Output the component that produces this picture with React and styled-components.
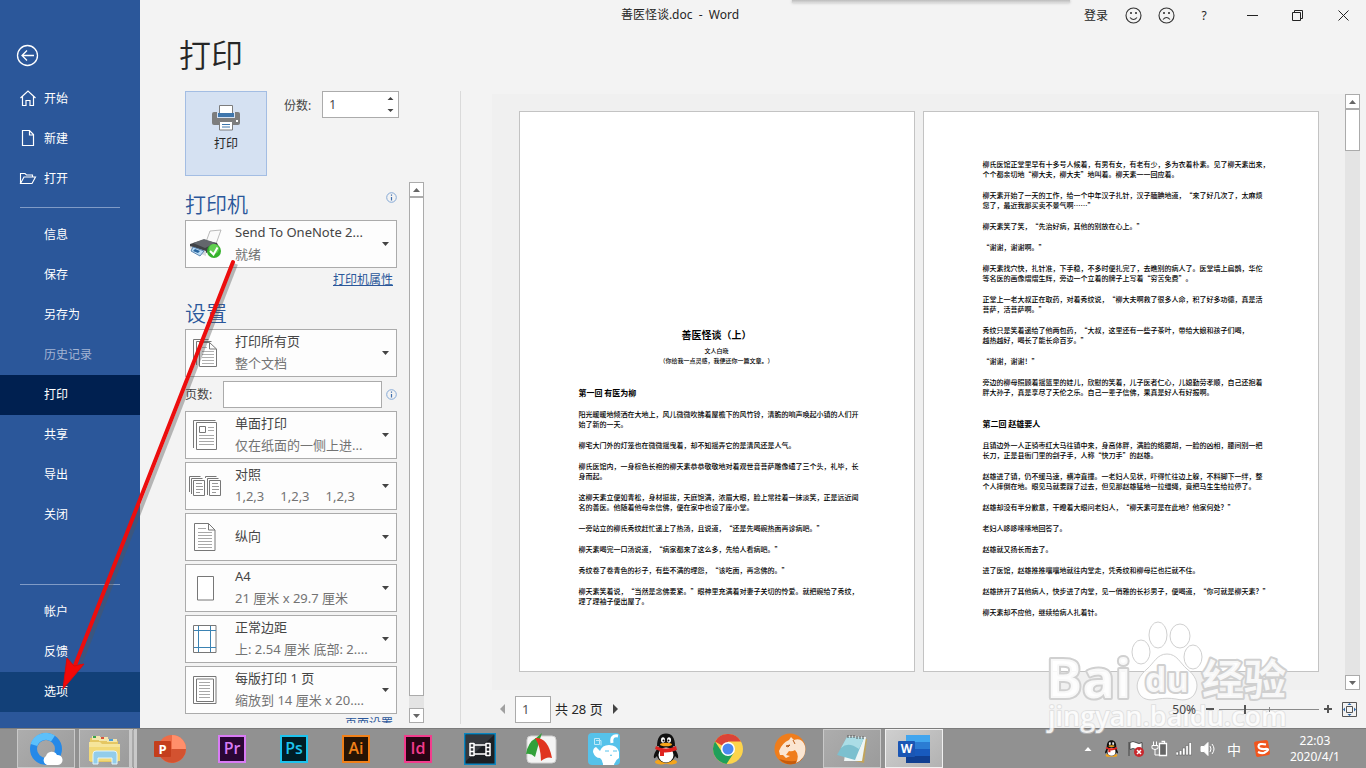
import React from 'react'
import styled, { createGlobalStyle, css } from 'styled-components'

const GlobalStyle = createGlobalStyle`
  * {
    box-sizing: border-box;
  }
  body {
    margin: 0;
    font-family: 'Noto Sans', 'Noto Sans CJK SC', sans-serif;
    font-size: 12px;
    color: #262626;
    background: #f3f3f3;
  }
  button, input {
    font: inherit;
    color: inherit;
  }
  svg {
    display: block;
    flex: none;
  }
`

const Screen = styled.div`
  position: relative;
  display: flex;
  flex-direction: column;
  height: 100vh;
  min-height: 768px;
  overflow: hidden;
`

const Window = styled.div`
  flex: 1;
  display: flex;
  min-height: 0;
`

/* ---------- sidebar ---------- */

const Sidebar = styled.nav`
  flex: none;
  display: flex;
  flex-direction: column;
  width: 140px;
  padding-bottom: 16px;
  background: #2b579a;
  color: #fff;
`

const BackButton = styled.button`
  display: flex;
  align-items: flex-end;
  height: 79px;
  padding: 0 0 12px 16px;
  border: 0;
  background: none;
`

const NavItem = styled.a`
  display: flex;
  align-items: center;
  gap: 7px;
  height: 40px;
  padding-bottom: 2px;
  padding-left: ${({ $icon }) => ($icon ? '19px' : '44px')};
  color: ${({ $muted }) => ($muted ? '#a3b4d3' : '#fff')};
  background: ${({ $state }) => ({ active: '#002050', hover: '#124078' }[$state] || 'none')};
  text-decoration: none;
`

const Divider = styled.hr`
  width: 100px;
  height: 1px;
  margin: 8px 20px 7px;
  border: 0;
  background: #809bc6;
`

const Spacer = styled.div`
  flex: 1;
`

/* ---------- title bar ---------- */

const Main = styled.main`
  flex: 1;
  display: flex;
  flex-direction: column;
  min-width: 0;
`

const TitleBar = styled.header`
  display: flex;
  align-items: center;
  height: 30px;
  padding-left: 140px;
`

const DocTitle = styled.div`
  flex: 1;
  padding-bottom: 2px;
  text-align: center;
  white-space: pre;
`

const TitleActions = styled.div`
  display: flex;
  align-items: center;
`

const TitleButton = styled.button`
  display: flex;
  align-items: center;
  justify-content: center;
  width: ${({ $width }) => $width || 46}px;
  height: 30px;
  padding: 0;
  border: 0;
  background: none;
`

const TopShade = styled.div`
  position: absolute;
  top: 0;
  left: 58%;
  width: 278px;
  height: 3px;
  background: linear-gradient(#bcbcbc, #dedede);
  box-shadow: 0 0 3px #bbb;
`

const PageTitle = styled.h1`
  height: 61px;
  margin: 0 0 0 39px;
  font-size: 32px;
  font-weight: 350;
  line-height: 50px;
`

const Content = styled.div`
  flex: 1;
  display: flex;
  min-height: 0;
`

/* ---------- settings ---------- */

const Settings = styled.section`
  flex: none;
  display: flex;
  flex-direction: column;
  width: 321px;
  margin-bottom: 4px;
  padding-left: 45px;
  border-right: 1px solid #dadada;
`

const PrintRow = styled.div`
  display: flex;
  align-items: flex-start;
  height: 91px;
`

const PrintButton = styled.button`
  display: flex;
  flex-direction: column;
  align-items: center;
  gap: 3px;
  width: 82px;
  height: 85px;
  padding: 13px 0 0;
  border: 1px solid #a3bde3;
  background: #d5e1f2;
`

const CopiesLabel = styled.label`
  display: flex;
  align-items: center;
  gap: 11px;
  margin-left: 17px;
  color: #444;
`

const Spinner = styled.span`
  display: flex;
  align-items: center;
  width: 77px;
  height: 27px;
  padding-right: 4px;
  border: 1px solid #ababab;
  background: #fff;
`

const SpinInput = styled.input`
  flex: 1;
  min-width: 0;
  padding: 0 6px;
  border: 0;
  background: none;
`

const ScrollRow = styled.div`
  flex: 1;
  display: flex;
  gap: 12px;
  min-height: 0;
  margin-bottom: 1px;
`

const SettingsList = styled.div`
  width: 212px;
  overflow: hidden;
`

const SectionHead = styled.div`
  display: flex;
  align-items: center;
  justify-content: space-between;
  height: 38px;
  padding-top: 3px;

  svg {
    margin-bottom: 10px;
  }
`

const SectionTitle = styled.h2`
  margin: 0;
  color: #2b579a;
  font-size: 21px;
  font-weight: 350;
`

const LinkRow = styled.div`
  height: 23px;
  padding-right: 4px;
  line-height: ${({ $tight }) => ($tight ? '14px' : '23px')};
  text-align: right;

  a {
    color: #2b579a;
  }
`

const Group = styled.div`
  display: flex;
  flex-direction: column;
  gap: 3px;
`

const OptionButton = styled.button`
  display: flex;
  align-items: center;
  width: 100%;
  height: 48px;
  padding: 0 7px 0 0;
  border: 1px solid #ababab;
  background: #fdfdfd;
  font-size: 13px;
  line-height: 22px;
  text-align: left;
  white-space: nowrap;
`

const OptionIcon = styled.span`
  display: flex;
  justify-content: ${({ $start }) => ($start ? 'flex-start' : 'center')};
  flex: none;
  width: 38px;
  margin-right: 11px;
  padding-left: ${({ $start }) => ($start ? '3px' : '0')};
`

const OptionText = styled.span`
  flex: 1;
  display: flex;
  flex-direction: column;
  min-width: 0;
  padding-bottom: 3px;
  color: #444;
`

const OptionSub = styled.span`
  display: flex;
  gap: 16px;
  color: #737373;
`

const PagesLabel = styled.label`
  display: flex;
  align-items: center;
  justify-content: space-between;
  height: 28px;
  color: #444;

  input {
    width: 159px;
    height: 27px;
    margin-left: 6px;
    border: 1px solid #ababab;
    background: #fff;
  }
`

/* ---------- scroll bars ---------- */

const ScrollTrack = styled.div`
  flex: none;
  display: flex;
  flex-direction: column;
  width: 15px;
  background: #e4e4e4;
`

const ScrollButton = styled.button`
  display: flex;
  align-items: center;
  justify-content: center;
  width: 15px;
  height: 15px;
  padding: 0;
  border: 1px solid #ababab;
  background: #fff;
`

const ScrollThumb = styled.div`
  border: 1px solid #ababab;
  background: #fff;
  ${({ $grow }) => ($grow ? css`flex: 1; margin-bottom: 12px;` : css`height: 42px; margin-bottom: auto;`)}
`

/* ---------- preview ---------- */

const Preview = styled.section`
  flex: 1;
  display: flex;
  flex-direction: column;
  min-width: 0;
  padding-left: 31px;
`

const PreviewArea = styled.div`
  flex: 1;
  display: flex;
  min-height: 0;
  padding: 3px 6px 0 0;
`

const Sheets = styled.div`
  flex: 1;
  display: flex;
  justify-content: center;
  align-items: flex-start;
  gap: 8px;
  min-width: 0;
  padding-top: 17px;
  background: #f0f0f0;
`

const Sheet = styled.article`
  display: flex;
  flex-direction: column;
  flex: 0 1 396px;
  min-width: 0;
  min-height: 561px;
  padding: 47px 59px 0;
  border: 1px solid #c3c3c3;
  background: #fff;
  color: #000;
  font-family: 'Noto Sans CJK SC', sans-serif;
  font-size: 7px;
  font-weight: 500;
  line-height: 10px;
  white-space: nowrap;
  text-spacing-trim: space-all;

  p {
    margin: 0 0 11px;
  }
  h4 {
    margin: 10px 0;
    font-size: 8px;
    line-height: 12px;
  }
`

const Cover = styled.div`
  margin: 169px 0 11px;
  font-size: 6px;
  text-align: center;

  h3 {
    margin: 0 0 4px;
    font-size: 10px;
    line-height: 14px;
  }
`

const PreviewFooter = styled.footer`
  display: flex;
  align-items: center;
  justify-content: space-between;
  height: 38px;
  padding: 0 9px 0 8px;
`

const Pager = styled.div`
  display: flex;
  align-items: center;
  font-size: 13px;

  input {
    width: 36px;
    height: 27px;
    margin: 0 4px 0 9px;
    padding: 0 6px;
    border: 1px solid #ababab;
    background: #fff;
    color: #555;
  }
`

const PageCount = styled.span`
  margin-right: 9px;
  padding-bottom: 1px;
`

const PlainButton = styled.button`
  display: flex;
  padding: 0;
  border: 0;
  background: none;
`

const Zoom = styled.div`
  position: relative;
  z-index: 1;
  display: flex;
  align-items: center;
  gap: 5px;
  color: #444;

  output {
    margin-right: 5px;
  }
`

const ZoomRange = styled.input`
  appearance: none;
  width: 100px;
  height: 10px;
  margin: 0;
  background:
    linear-gradient(#8a8a8a, #8a8a8a) center / 1px 5px no-repeat,
    linear-gradient(#8a8a8a, #8a8a8a) center / 100% 1px no-repeat;

  &::-webkit-slider-thumb {
    appearance: none;
    width: 2px;
    height: 9px;
    background: #555;
  }
`

/* ---------- taskbar ---------- */

const Taskbar = styled.footer`
  flex: none;
  display: flex;
  align-items: center;
  height: 40px;
  padding-left: 17px;
  border-top: 1px solid #7c7c7c;
  background: #919191;
`

const Apps = styled.div`
  flex: 1;
  display: flex;
  gap: 4px;
`

const openApp = css`
  border-color: #c9c9c9;
  background: linear-gradient(135deg, #adadad, #9b9b9b);
`

const focusedApp = css`
  border-color: #f0f0f0;
  background: linear-gradient(135deg, #cfcfcf, #b2b2b2);
`

const AppButton = styled.button`
  display: flex;
  align-items: center;
  justify-content: center;
  width: 58px;
  height: 39px;
  padding: 0;
  border: 1px solid transparent;
  background: none;
  ${({ $state }) => $state === 'open' && openApp}
  ${({ $state }) => $state === 'focused' && focusedApp}
  ${({ $stack }) => $stack && css`
    border-right: 8px double #c9c9c9;
  `}
`

const Tray = styled.div`
  display: flex;
  align-items: center;
`

const TrayButton = styled.button`
  display: flex;
  align-items: center;
  justify-content: center;
  width: ${({ $wide }) => ($wide ? 28 : 24)}px;
  height: 39px;
  padding: 0;
  border: 0;
  background: none;
  color: #fff;
  font-size: 14px;
`

const Clock = styled.time`
  margin: 0 26px 0 14px;
  color: #fff;
  line-height: 16px;
  text-align: center;
`

/* ---------- marks drawn over the screen ---------- */

const ArrowMark = styled.svg`
  position: absolute;
  left: 50px;
  top: 250px;
  pointer-events: none;
`

const Watermark = styled.svg`
  position: absolute;
  right: 66px;
  bottom: 28px;
  pointer-events: none;
  font-family: 'Open Sans', 'Noto Sans CJK SC', sans-serif;
`

/* ---------- icons ---------- */

const Caret = ({ up, color = '#444', size = 7 }) => (
  <svg width={size} height="4" viewBox="0 0 7 4">
    <path d={up ? 'M0 4L3.500 0L7 4z' : 'M0 0h7L3.500 4z'} fill={color} />
  </svg>
)

const SideCaret = ({ left }) => (
  <svg width="6" height="10" viewBox="0 0 6 10">
    <path d={left ? 'M5 0v10L0 5z' : 'M1 0v10l5-5z'} fill={left ? '#a0a0a0' : '#444'} />
  </svg>
)

const BackIcon = () => (
  <svg width="23" height="23" viewBox="0 0 23 23" fill="none" stroke="#fff" strokeWidth="1.3">
    <circle cx="11.500" cy="11.500" r="10" />
    <path d="M18 11.500H6M11 6.500l-5 5 5 5" />
  </svg>
)

const NavIcons = {
  home: (
    <svg width="18" height="18" viewBox="0 0 18 18" fill="none" stroke="#fff" strokeWidth="1.2">
      <path d="M1.500 9L9 2l7.500 7M3.500 7.500v9h3.500v-5h4v5h3.500v-9" />
    </svg>
  ),
  file: (
    <svg width="18" height="18" viewBox="0 0 18 18" fill="none" stroke="#fff" strokeWidth="1.2">
      <path d="M3.500 1.500h7l4 4v11h-11zM10.500 1.500v4.500h4" />
    </svg>
  ),
  folder: (
    <svg width="18" height="18" viewBox="0 0 18 18" fill="none" stroke="#fff" strokeWidth="1.1">
      <path d="M1.500 14.500v-10h4.500l1.500 1.500h6v2M1.500 14.500l3.500-6.500h11.500l-3.500 6.500z" />
    </svg>
  )
}

const Face = ({ sad }) => (
  <svg width="17" height="17" viewBox="0 0 17 17" fill="none" stroke="#333" strokeWidth="1.100">
    <circle cx="8.500" cy="8.500" r="7.500" />
    <path d={sad ? 'M5 12.500q3.500-4 7 0' : 'M5 10.500q3.500 4 7 0'} />
    <path d="M6 5v2M11 5v2" strokeWidth="1.600" />
  </svg>
)

const PrinterIcon = () => (
  <svg width="28" height="26" viewBox="0 0 28 26">
    <rect x="0" y="7" width="28" height="13" rx="2" fill="#7d7d7d" />
    <path d="M5 6h18v7H5z" fill="#d5e1f2" />
    <path d="M7.500.500h13v11h-13z" fill="#fff" stroke="#7d7d7d" />
    <path d="M6 8h16v4H6z" fill="#3f76ac" />
    <path d="M8 1h12v7H8z" fill="#fff" />
    <path d="M7.500 16.500h13v8.500h-13z" fill="#fff" stroke="#7d7d7d" />
    <path d="M10 19.500h8M10 22h8" stroke="#3f76ac" />
    <rect x="24" y="15" width="2" height="2" fill="#fff" />
  </svg>
)

const InfoIcon = () => (
  <svg width="11" height="11" viewBox="0 0 11 11" fill="none">
    <circle cx="5.500" cy="5.500" r="4.800" stroke="#85a9d6" />
    <path d="M5.500 5v3.500M5.500 2.500v1.200" stroke="#3f6fae" strokeWidth="1.200" />
  </svg>
)

const DeviceIcon = () => (
  <svg width="34" height="30" viewBox="0 0 34 30">
    <path d="M17 13L21 2l11-1-5 14z" fill="#fafafa" stroke="#aaa" strokeWidth=".8" />
    <path d="M1 15l13-4 14 3 2 4-13 6-16-6z" fill="#3f4246" />
    <path d="M4 14l11-4 12 4-11 5z" fill="#63676c" />
    <path d="M1 17l16 5v5L2 21z" fill="#d5dade" />
    <path d="M4 18l11 4-4 5-9-5z" fill="#b9dcf5" stroke="#3c6c9e" strokeWidth=".8" />
    <path d="M6 20l5 2-2 2-5-2z" fill="#28659f" />
    <circle cx="25" cy="22" r="7" fill="#35b22c" />
    <circle cx="25" cy="20" r="5" fill="#62cf52" />
    <path d="M21 22l3.500 3.500 4-7" fill="none" stroke="#fff" strokeWidth="2" />
  </svg>
)

const line = { fill: '#fff', stroke: '#777', strokeWidth: 1 }

const OptionIcons = {
  device: <DeviceIcon />,
  all: (
    <svg width="26" height="30" viewBox="0 0 26 30" {...line}>
      <path d="M1.500 26V1.500h15M4.500 27V3.500h15" fill="none" />
      <path d="M7.500 4.500h10l7 6.500v17.500h-17zM17.500 4.500v6.500h7" />
      <path d="M10 9.500h5M10 13.500h12M10 16.500h12M10 19.500h12M10 22.500h12M10 25.500h12" stroke="#b0b0b0" />
    </svg>
  ),
  single: (
    <svg width="26" height="32" viewBox="0 0 26 32" {...line}>
      <path d="M1.500 29V1.500h22" fill="none" />
      <path d="M4.500 3.500h20v27h-20zM7.500 7.500h6v6h-6z" />
      <path d="M16 8.500h6M16 11.500h6M7 16.500h15M7 19.500h15M7 22.500h15M7 25.500h15" stroke="#a8a8a8" />
    </svg>
  ),
  collate: (
    <svg width="33" height="22" viewBox="0 0 33 22" {...line}>
      <path d="M.500 17V1.500h11M2.500 19V3.500h11M16.500 3V1.500h11M18.500 20V3.500h11" fill="none" />
      <path d="M4.500 5.500h11v15h-11zM20.500 5.500h11v15h-11z" />
      <path d="M7 8.500h6M7 11.500h7M7 14.500h7M7 17.500h4M23 8.500h6M23 11.500h7M23 14.500h7M23 17.500h4" stroke="#999" />
    </svg>
  ),
  portrait: (
    <svg width="22" height="29" viewBox="0 0 22 29" {...line}>
      <path d="M.500.500h14l6.500 6.500v20.500H.500zM14.500.500v6.500h6.500" />
      <path d="M4 5.500h8M4 9.500h14M4 12.500h14M4 15.500h14M4 18.500h14M4 21.500h14M4 24.500h14" stroke="#a8a8a8" />
    </svg>
  ),
  size: (
    <svg width="17" height="25" viewBox="0 0 17 25" {...line}>
      <path d="M.500.500h16v23.500H.500z" />
    </svg>
  ),
  margins: (
    <svg width="24" height="29" viewBox="0 0 24 29" {...line}>
      <path d="M.500.500h22.500v27H.500z" />
      <path d="M5.500 1v26M17.500 1v26M1 5.500h22M1 22.500h22" stroke="#3b83b3" />
    </svg>
  ),
  sheet: (
    <svg width="24" height="29" viewBox="0 0 24 29" {...line}>
      <path d="M.500.500h22.500v27H.500zM3.500 3h17v22.500h-17z" />
      <path d="M6 6.500h11M6 9.500h11M6 12.500h11M6 15.500h11M6 18.500h11M6 21.500h11" stroke="#a8a8a8" />
    </svg>
  )
}

const FitIcon = () => (
  <svg width="15" height="15" viewBox="0 0 15 15" fill="none" stroke="#555">
    <path d="M.500.500h14v14H.500zM4.500 4.500h6v6h-6z" />
    <path d="M7.500 1l2 2h-4zM7.500 14l2-2h-4zM1 7.500l2-2v4zM14 7.500l-2-2v4z" fill="#2b66a8" stroke="none" />
  </svg>
)

const AdobeIcon = ({ text, color, dark }) => (
  <svg width="30" height="30" viewBox="0 0 30 30">
    <rect x="1" y="1" width="28" height="28" fill={color} />
    <rect x="3" y="3" width="24" height="24" fill={dark} />
    <text x="15" y="20" fill={color} fontSize="16" fontWeight="600" textAnchor="middle" fontFamily="'Open Sans', sans-serif">{text}</text>
  </svg>
)

const Penguin = ({ size = 32 }) => (
  <svg width={size} height={size} viewBox="0 0 32 32">
    <path d="M9 14c-3 3-6 8-5 11 1 1 3-2 3-2h18s2 3 3 2c1-3-2-8-5-11z" fill="#111" />
    <ellipse cx="11" cy="29" rx="6" ry="2.500" fill="#f5a51b" />
    <ellipse cx="21" cy="29" rx="6" ry="2.500" fill="#f5a51b" />
    <ellipse cx="16" cy="20" rx="9.500" ry="10" fill="#111" />
    <ellipse cx="16" cy="22" rx="7.500" ry="7.500" fill="#fff" />
    <path d="M7 13c0-8 3-12.500 9-12.500S25 5 25 13z" fill="#111" />
    <ellipse cx="13" cy="7" rx="2" ry="2.800" fill="#fff" />
    <ellipse cx="19" cy="7" rx="2" ry="2.800" fill="#fff" />
    <circle cx="13.500" cy="7.500" r="1" fill="#111" />
    <circle cx="18.500" cy="7.500" r="1" fill="#111" />
    <ellipse cx="16" cy="11.500" rx="6" ry="1.700" fill="#f5a51b" />
    <path d="M6 13q10 5 20 0l1 4q-8 3-13 2.500V23h-4v-5l-5-2z" fill="#e0231f" />
  </svg>
)

const AppIcons = {
  browser: (
    <svg width="34" height="34" viewBox="0 0 34 34">
      <circle cx="17" cy="17" r="12.500" fill="none" stroke="#2589e8" strokeWidth="7" />
      <path d="M5 13a12.500 12.500 0 0 1 19-6.500" fill="none" stroke="#5cc0fb" strokeWidth="7" />
      <path d="M18 33a5 5 0 0 1-1-9 6 6 0 0 1 11-1 5 5 0 0 1 1 10z" fill="#fff" />
    </svg>
  ),
  explorer: (
    <svg width="34" height="32" viewBox="0 0 34 32">
      <path d="M2 5h12l2 3h14v21H2z" fill="#e5c763" />
      <path d="M4 3h8v4H4z" fill="#f3e6ad" />
      <path d="M5 3h3v2H5z" fill="#3aa34b" />
      <path d="M11 4h9v4h-9z" fill="#f3e6ad" />
      <path d="M13 4h3v2h-3z" fill="#d9533b" />
      <path d="M19 6h10v3H19z" fill="#f3e6ad" />
      <path d="M21 6h4v2h-4z" fill="#4a9fd8" />
      <path d="M1 9h11l2 2h18v17H1z" fill="#f6e59b" />
      <path d="M1 14h31v14H1z" fill="#f2d977" />
      <path d="M5 31V21q0-3 3-3h18q3 0 3 3v10h-5v-6H10v6z" fill="#93cdea" stroke="#dff4fc" />
    </svg>
  ),
  powerpoint: (
    <svg width="34" height="30" viewBox="0 0 34 30">
      <circle cx="19" cy="15" r="14" fill="#ed6c47" />
      <path d="M19 1a14 14 0 0 1 14 14H19z" fill="#ff8f6b" />
      <path d="M33 15a14 14 0 0 1-27 5l13-5z" fill="#d35230" />
      <rect x="1" y="7" width="17" height="16" rx="1" fill="#c43e1c" />
      <text x="9.500" y="20" fill="#fff" fontSize="13" fontWeight="700" textAnchor="middle" fontFamily="'Open Sans', sans-serif">P</text>
    </svg>
  ),
  premiere: <AdobeIcon text="Pr" color="#d97bf5" dark="#2a0634" />,
  photoshop: <AdobeIcon text="Ps" color="#1ec3ee" dark="#001d26" />,
  illustrator: <AdobeIcon text="Ai" color="#f08019" dark="#281404" />,
  indesign: <AdobeIcon text="Id" color="#f23c8d" dark="#280414" />,
  film: (
    <svg width="32" height="32" viewBox="0 0 32 32">
      <rect width="32" height="32" fill="#0a86c0" />
      <rect x="1.500" y="1.500" width="29" height="29" fill="#1c1f23" />
      <path d="M2 2h28L2 28z" fill="#34383d" />
      <path d="M6 10v13M10 10v13M22 10v13M26 10v13M10 12h12M10 21h12" stroke="#fff" strokeWidth="1.500" />
      <path d="M6 10.500h4M6 14.500h4M6 18.500h4M6 22.500h4M22 10.500h4M22 14.500h4M22 18.500h4M22 22.500h4" stroke="#fff" strokeWidth="1.500" />
    </svg>
  ),
  capture: (
    <svg width="32" height="32" viewBox="0 0 32 32">
      <rect x="1" y="3" width="29" height="27" rx="4" fill="#f4f4f4" stroke="#d0d0d0" />
      <path d="M0 21Q2 9 10 5l6-5-2 6-5 18q-4-4-9-3z" fill="#32a03a" />
      <path d="M9 5q13-1 17 20-5-2-11 3Q15 14 9 5z" fill="#e0341f" />
    </svg>
  ),
  cartoon: (
    <svg width="32" height="32" viewBox="0 0 32 32">
      <rect width="32" height="32" rx="4" fill="#56c2ea" />
      <path d="M24 10c-1-5 1-8 6-7" fill="none" stroke="#fff" strokeWidth="3" />
      <path d="M5 19q0-4 3-5l4 4q2-6 9-6 8 0 10 7v6q-4 2-5 7H15q0-5-3-7-5 0-7-6z" fill="#fff" />
      <path d="M17 18h4M25 18h4M22 22q1 1 2 0" stroke="#56c2ea" fill="none" />
      <path d="M6.500 5.500h5v6h-5zM8 7.500h5v5" fill="none" stroke="#bfe9f8" />
    </svg>
  ),
  qq: <Penguin />,
  chrome: (
    <svg width="30" height="30" viewBox="0 0 30 30">
      <circle cx="15" cy="15" r="15" fill="#fdd44b" />
      <path d="M15 15L2 7.500A15 15 0 0 1 28 7.500H15z" fill="#dc4437" />
      <path d="M2 7.500a15 15 0 0 0 11.500 22.400L21 18.500 9 18z" fill="#1f9f5b" />
      <circle cx="15" cy="15" r="7" fill="#fff" />
      <circle cx="15" cy="15" r="5.500" fill="#4b88f0" />
    </svg>
  ),
  cheetah: (
    <svg width="32" height="32" viewBox="0 0 32 32">
      <circle cx="16" cy="16" r="15.500" fill="#ef7d1c" />
      <path d="M5 26A15.500 15.500 0 0 0 29 25q-8 6-24 1z" fill="#c65b0b" />
      <path d="M5 18q3-8 10-11l2-3 3 3q8-3 11 6 2 12-9 17 4-8-1-13-3 2-6 1l-3 4 4 1-4 2-3-3-3 0z" fill="#fbe6d2" />
      <path d="M12 13l4-1-2 2zM19 7l2 4" stroke="#b85a16" fill="none" />
    </svg>
  ),
  notepad: (
    <svg width="32" height="32" viewBox="0 0 32 32">
      <path d="M12 4l19 2-3 24-9-2z" fill="#c2a45a" />
      <path d="M12 3l18 1-4 24H8z" fill="#eef5f5" />
      <path d="M11 4l17 1-9 22L1 22z" fill="#7cc0cf" />
      <path d="M11 4l17 1-5 11Q12 8 5 15z" fill="#abdde6" />
      <path d="M12 2v3M15 2v3M18 2v3M21 3v3M24 3v3M27 3v3" stroke="#555" />
    </svg>
  ),
  word: (
    <svg width="34" height="30" viewBox="0 0 34 30">
      <rect x="9" y="1" width="24" height="7" fill="#41a5ee" />
      <rect x="9" y="8" width="24" height="7" fill="#2b7cd3" />
      <rect x="9" y="15" width="24" height="7" fill="#185abd" />
      <rect x="9" y="22" width="24" height="7" fill="#103f91" />
      <rect x="1" y="7" width="17" height="16" rx="1" fill="#1a56b4" />
      <text x="9.500" y="19" fill="#fff" fontSize="12" fontWeight="700" textAnchor="middle" fontFamily="'Open Sans', sans-serif">W</text>
    </svg>
  )
}

const TrayIcons = {
  flag: (
    <svg width="18" height="18" viewBox="0 0 18 18">
      <path d="M2 2v14M3 2.500q3-2 6 0t6 0v7q-3 2-6 0t-6 0z" fill="#fff" stroke="#333" strokeWidth=".8" />
      <circle cx="12" cy="12" r="5" fill="#c9282d" />
      <path d="M10 10l4 4M14 10l-4 4" stroke="#fff" strokeWidth="1.500" />
    </svg>
  ),
  battery: (
    <svg width="18" height="18" viewBox="0 0 18 18" fill="none" stroke="#fff">
      <path d="M8.500 3.500h7v12h-7zM10.500 1.500h3v2" fill="#666" strokeWidth="1.300" />
      <path d="M2.500 1.500v4M5.500 1.500v4M1 5.500h6v3q-3 2-6 0zM4 9v6h4" />
    </svg>
  ),
  signal: (
    <svg width="16" height="14" viewBox="0 0 16 14" fill="#fff" stroke="#555" strokeWidth=".5">
      <path d="M0 10h2.500v3H0zM3.300 8.500h2.500V13H3.300zM6.500 6H9v7H6.500zM9.800 3.500h2.500V13H9.800zM13 .500h2.500V13H13z" />
    </svg>
  ),
  sound: (
    <svg width="16" height="16" viewBox="0 0 16 16" fill="none" stroke="#fff">
      <path d="M1 5.500h3l4-4v13l-4-4H1z" fill="#fff" />
      <path d="M10 5q2 3 0 6M12 3q4 5 0 10" />
    </svg>
  ),
  sogou: (
    <svg width="17" height="17" viewBox="0 0 17 17">
      <path d="M1 3q0-1 1.500-1.500L13 0q1.500 0 2 1.500L17 13q0 1.500-1.500 2L5 17q-1.500 0-2-1.500z" fill="#f1551d" />
      <path d="M13 4.500Q5.500 3 5.500 6.200T12 9t-1 4q-3 .5-6-1" fill="none" stroke="#fff" strokeWidth="2.200" />
    </svg>
  )
}

/* ---------- data ---------- */

const mainNav = [
  { label: '信息' },
  { label: '保存' },
  { label: '另存为' },
  { label: '历史记录', muted: true },
  { label: '打印', state: 'active' },
  { label: '共享' },
  { label: '导出' },
  { label: '关闭' }
]

const options = [
  { icon: 'single', title: '单面打印', sub: ['仅在纸面的一侧上进...'] },
  { icon: 'collate', title: '对照', sub: ['1,2,3', '1,2,3', '1,2,3'] },
  { icon: 'portrait', title: '纵向' },
  { icon: 'size', title: 'A4', sub: ['21 厘米 x 29.7 厘米'] },
  { icon: 'margins', title: '正常边距', sub: ['上: 2.54 厘米 底部: 2....'] },
  { icon: 'sheet', title: '每版打印 1 页', sub: ['缩放到 14 厘米 x 20....'] }
]

const chapterOne = [
  ['阳光暖暖地倾洒在大地上，风儿微微吹拂着屋檐下的风竹铃，清脆的响声唤起小镇的人们开', '始了新的一天。'],
  ['柳宅大门外的灯笼也在微微摇曳着，却不知摇弄它的是清风还是人气。'],
  ['柳氏医馆内，一身棕色长袍的柳天素恭恭敬敬地对着观世音菩萨雕像磕了三个头，礼毕，长', '身而起。'],
  ['这柳天素立便如青松，身材挺拔，天庭饱满，浓眉大眼，脸上常挂着一抹淡笑，正是远近闻', '名的善医。他随着他母亲信佛，便在家中也设了座小堂。'],
  ['一旁站立的柳氏秀纹赶忙递上了热汤，且说道，“还是先喝碗热面再诊病吧。”'],
  ['柳天素喝完一口汤说道，“病家都来了这么多，先给人看病吧。”'],
  ['秀纹卷了卷青色的衫子，有些不满的埋怨，“该吃面，再念佛的。”'],
  ['柳天素笑着说，“当然是念佛要紧。”眼神里充满着对妻子关切的怜爱。就把碗给了秀纹，', '理了理袖子便出屋了。']
]

const chapterOneEnd = [
  ['柳氏医馆正堂里早有十多号人候着，有男有女，有老有少，多为衣着朴素。见了柳天素出来，', '个个都亲切地“柳大夫，柳大夫”地叫着。柳天素一一回应着。'],
  ['柳天素开始了一天的工作，给一个中年汉子扎针，汉子腼腆地道，“来了好几次了，太麻烦', '您了，最近我那买卖不景气啊……”'],
  ['柳天素笑了笑，“先治好病，其他的别放在心上。”'],
  ['“谢谢，谢谢啊。”'],
  ['柳天素找穴快，扎针准，下手稳，不多时便扎完了，去瞧别的病人了。医堂墙上扁鹊，华佗', '等名医的画像熠熠生辉，旁边一个立着的牌子上写着“穷苦免费”。'],
  ['正堂上一老大叔正在取药，对着秀纹说，“柳大夫啊救了很多人命，积了好多功德，真是活', '菩萨，活菩萨啊。”'],
  ['秀纹只是笑着递给了他两包药，“大叔，这里还有一些子茶叶，带给大娘和孩子们喝，', '越热越好，喝长了能长命百岁。”'],
  ['“谢谢，谢谢！”'],
  ['旁边的柳母照顾着摇篮里的娃儿，欣慰的笑着，儿子医者仁心，儿媳勤劳孝顺，自己还抱着', '胖大孙子，真是享尽了天伦之乐。自己一辈子信佛，果真是好人有好报啊。']
]

const chapterTwo = [
  ['且镇边外一人正骑枣红大马往镇中来，身高体胖，满脸的络腮胡，一脸的凶相，腰间别一把', '长刀，正是县衙门里的刽子手，人称“快刀手”的赵雄。'],
  ['赵雄进了镇，仍不缓马速，横冲直撞。一老妇人见状，吓得忙往边上躲，不料脚下一绊，整', '个人摔倒在地。眼见马就要踩了过去，但见那赵雄猛地一拉缰绳，竟把马生生给拉停了。'],
  ['赵雄却没有半分歉意，干瞪着大眼问老妇人，“柳天素可是在此地？他家何处？”'],
  ['老妇人哆哆嗦嗦地回答了。'],
  ['赵雄就又扬长而去了。'],
  ['进了医馆，赵雄推推嚷嚷地就往内堂走，凭秀纹和柳母拦也拦就不住。'],
  ['赵雄挤开了其他病人，快步进了内堂，见一俏雅的长衫男子，便喝道，“你可就是柳天素？”'],
  ['柳天素却不应他，继续给病人扎着针。']
]

const apps = [
  { icon: 'browser', label: 'QQ浏览器', state: 'open' },
  { icon: 'explorer', label: '文件资源管理器', state: 'open', stack: true },
  { icon: 'powerpoint', label: 'PowerPoint' },
  { icon: 'premiere', label: 'Premiere' },
  { icon: 'photoshop', label: 'Photoshop' },
  { icon: 'illustrator', label: 'Illustrator' },
  { icon: 'indesign', label: 'InDesign' },
  { icon: 'film', label: '视频编辑' },
  { icon: 'capture', label: '截图' },
  { icon: 'cartoon', label: '桌面助手' },
  { icon: 'qq', label: 'QQ' },
  { icon: 'chrome', label: 'Chrome' },
  { icon: 'cheetah', label: '猎豹浏览器' },
  { icon: 'notepad', label: '记事本', state: 'open' },
  { icon: 'word', label: 'Word', state: 'focused' }
]

/* ---------- components ---------- */

const Option = ({ icon, title, sub }) => (
  <OptionButton type="button" aria-haspopup="listbox">
    <OptionIcon $start={icon === 'device' || icon === 'collate'}>{OptionIcons[icon]}</OptionIcon>
    <OptionText>
      <span>{title}</span>
      {sub && <OptionSub>{sub.map((s, i) => <span key={i}>{s}</span>)}</OptionSub>}
    </OptionText>
    <Caret />
  </OptionButton>
)

const ScrollBar = ({ grow }) => (
  <ScrollTrack>
    <ScrollButton type="button" aria-label="向上滚动"><Caret up color="#666" /></ScrollButton>
    <ScrollThumb $grow={grow} />
    <ScrollButton type="button" aria-label="向下滚动"><Caret color="#666" /></ScrollButton>
  </ScrollTrack>
)

const Paragraphs = ({ items }) => items.map((lines, i) => (
  <p key={i}>
    {lines[0]}
    {lines[1] && <><br />{lines[1]}</>}
  </p>
))

const Backstage = () => (
  <Sidebar>
    <BackButton type="button" aria-label="返回"><BackIcon /></BackButton>
    <NavItem href="#home" $icon>{NavIcons.home}开始</NavItem>
    <NavItem href="#new" $icon>{NavIcons.file}新建</NavItem>
    <NavItem href="#open" $icon>{NavIcons.folder}打开</NavItem>
    <Divider />
    {mainNav.map(({ label, muted, state }) => (
      <NavItem key={label} href="#nav" $muted={muted} $state={state}>{label}</NavItem>
    ))}
    <Spacer />
    <Divider />
    <NavItem href="#account">帐户</NavItem>
    <NavItem href="#feedback">反馈</NavItem>
    <NavItem href="#options" $state="hover">选项</NavItem>
  </Sidebar>
)

const PrintSettings = () => (
  <Settings>
    <PrintRow>
      <PrintButton type="button"><PrinterIcon />打印</PrintButton>
      <CopiesLabel>
        份数:
        <Spinner>
          <SpinInput defaultValue="1" inputMode="numeric" />
          <svg width="7" height="17" viewBox="0 0 7 17" fill="#444">
            <path d="M.500 4L3.500 1l3 3zM.500 13h6l-3 3z" />
          </svg>
        </Spinner>
      </CopiesLabel>
    </PrintRow>
    <ScrollRow>
      <SettingsList>
        <SectionHead>
          <SectionTitle>打印机</SectionTitle>
          <InfoIcon />
        </SectionHead>
        <Option icon="device" title="Send To OneNote 2..." sub={['就绪']} />
        <LinkRow><a href="#printer">打印机属性</a></LinkRow>
        <SectionHead>
          <SectionTitle>设置</SectionTitle>
        </SectionHead>
        <Group>
          <Option icon="all" title="打印所有页" sub={['整个文档']} />
          <PagesLabel>
            页数:
            <input type="text" />
            <InfoIcon />
          </PagesLabel>
          {options.map(o => <Option key={o.icon} {...o} />)}
          <LinkRow $tight><a href="#setup">页面设置</a></LinkRow>
        </Group>
      </SettingsList>
      <ScrollBar grow />
    </ScrollRow>
  </Settings>
)

const PrintPreview = () => (
  <Preview>
    <PreviewArea>
      <Sheets>
        <Sheet>
          <Cover>
            <h3>善医怪谈（上）</h3>
            <div>文人白晓</div>
            <div>（你给我一点灵感，我便还你一篇文章。）</div>
          </Cover>
          <h4>第一回 有医为柳</h4>
          <Paragraphs items={chapterOne} />
        </Sheet>
        <Sheet>
          <Paragraphs items={chapterOneEnd} />
          <h4>第二回 赵雄要人</h4>
          <Paragraphs items={chapterTwo} />
        </Sheet>
      </Sheets>
      <ScrollBar />
    </PreviewArea>
    <PreviewFooter>
      <Pager>
        <PlainButton type="button" aria-label="上一页"><SideCaret left /></PlainButton>
        <input defaultValue="1" aria-label="当前页" />
        <PageCount>共 28 页</PageCount>
        <PlainButton type="button" aria-label="下一页"><SideCaret /></PlainButton>
      </Pager>
      <Zoom>
        <output>50%</output>
        <PlainButton type="button" aria-label="缩小">
          <svg width="8" height="8"><path d="M0 4h8" stroke="#555" strokeWidth="2" /></svg>
        </PlainButton>
        <ZoomRange type="range" defaultValue="25" aria-label="缩放" />
        <PlainButton type="button" aria-label="放大">
          <svg width="8" height="8"><path d="M0 4h8M4 0v8" stroke="#555" strokeWidth="2" /></svg>
        </PlainButton>
        <PlainButton type="button" aria-label="缩放到页面">
          <svg width="5" height="1" />
          <FitIcon />
        </PlainButton>
      </Zoom>
    </PreviewFooter>
  </Preview>
)

const DesktopBar = () => (
  <Taskbar>
    <Apps>
      {apps.map(({ icon, label, state, stack }) => (
        <AppButton key={icon} type="button" aria-label={label} $state={state} $stack={stack}>
          {AppIcons[icon]}
        </AppButton>
      ))}
    </Apps>
    <Tray>
      <TrayButton type="button" aria-label="显示隐藏的图标"><Caret up color="#fff" size={8} /></TrayButton>
      <TrayButton type="button" aria-label="QQ"><Penguin size={17} /></TrayButton>
      <TrayButton type="button" aria-label="操作中心">{TrayIcons.flag}</TrayButton>
      <TrayButton type="button" aria-label="电源">{TrayIcons.battery}</TrayButton>
      <TrayButton type="button" aria-label="网络">{TrayIcons.signal}</TrayButton>
      <TrayButton type="button" aria-label="音量">{TrayIcons.sound}</TrayButton>
      <TrayButton type="button" $wide>中</TrayButton>
      <TrayButton type="button" aria-label="输入法" $wide>{TrayIcons.sogou}</TrayButton>
      <Clock>22:03<br />2020/4/1</Clock>
    </Tray>
  </Taskbar>
)

const App = () => (
  <Screen lang="zh-CN">
    <GlobalStyle />
    <Window>
      <Backstage />
      <Main>
        <TitleBar>
          <DocTitle>善医怪谈.doc  -  Word</DocTitle>
          <TitleActions>
            <TitleButton type="button" $width={32}>登录</TitleButton>
            <TitleButton type="button" aria-label="微笑" $width={42}><Face /></TitleButton>
            <TitleButton type="button" aria-label="哭脸" $width={24}><Face sad /></TitleButton>
            <TitleButton type="button" $width={52}>?</TitleButton>
            <TitleButton type="button" aria-label="最小化" $width={44}>
              <svg width="11" height="11"><path d="M0 5.500h11" stroke="#222" /></svg>
            </TitleButton>
            <TitleButton type="button" aria-label="还原">
              <svg width="11" height="11" fill="none" stroke="#222"><path d="M.500 2.500h8v8h-8zM2.500 2V.500h8v8H9" /></svg>
            </TitleButton>
            <TitleButton type="button" aria-label="关闭">
              <svg width="11" height="11"><path d="M.500.500l10 10M10.500.500l-10 10" stroke="#222" /></svg>
            </TitleButton>
          </TitleActions>
        </TitleBar>
        <PageTitle>打印</PageTitle>
        <Content>
          <PrintSettings />
          <PrintPreview />
        </Content>
      </Main>
    </Window>
    <DesktopBar />
    <TopShade />
    <Watermark width="260" height="124" viewBox="0 0 260 124" fill="#fff" fillOpacity=".85" stroke="#d0d0d0" strokeLinejoin="round">
      <ellipse cx="101" cy="36" rx="9" ry="12" />
      <ellipse cx="118" cy="19" rx="9" ry="13" />
      <ellipse cx="140" cy="20" rx="10" ry="12" />
      <ellipse cx="153" cy="41" rx="9" ry="12" />
      <path d="M127 38c10 0 13 9 20 15 8 6 12 14 9 22-3 9-12 10-20 8-7-1-11-1-18 0-8 2-17 1-20-8-3-8 2-16 9-22 7-6 10-15 20-15z" />
      <g fontWeight="700" paintOrder="stroke" strokeWidth="4">
        <text x="6" y="82" fontSize="54">Bai</text>
        <text x="127" y="76" fontSize="34" textAnchor="middle">du</text>
        <text x="162" y="79" fontSize="42">经验</text>
      </g>
      <text x="8" y="110" fontSize="27" fontWeight="600" paintOrder="stroke" strokeWidth="2" strokeOpacity=".5">jingyan.baidu.com</text>
    </Watermark>
    <ArrowMark width="200" height="450" viewBox="0 0 200 450">
      <path d="M186 14L28 420" stroke="#555" strokeOpacity=".4" strokeWidth="4" />
      <path d="M183 12L24 418" stroke="#ec0d0d" strokeWidth="4" strokeLinecap="round" />
      <path d="M13 439l4-31 7 8 10-2z" fill="#f30808" stroke="#d90b0b" />
    </ArrowMark>
  </Screen>
)

export default App
